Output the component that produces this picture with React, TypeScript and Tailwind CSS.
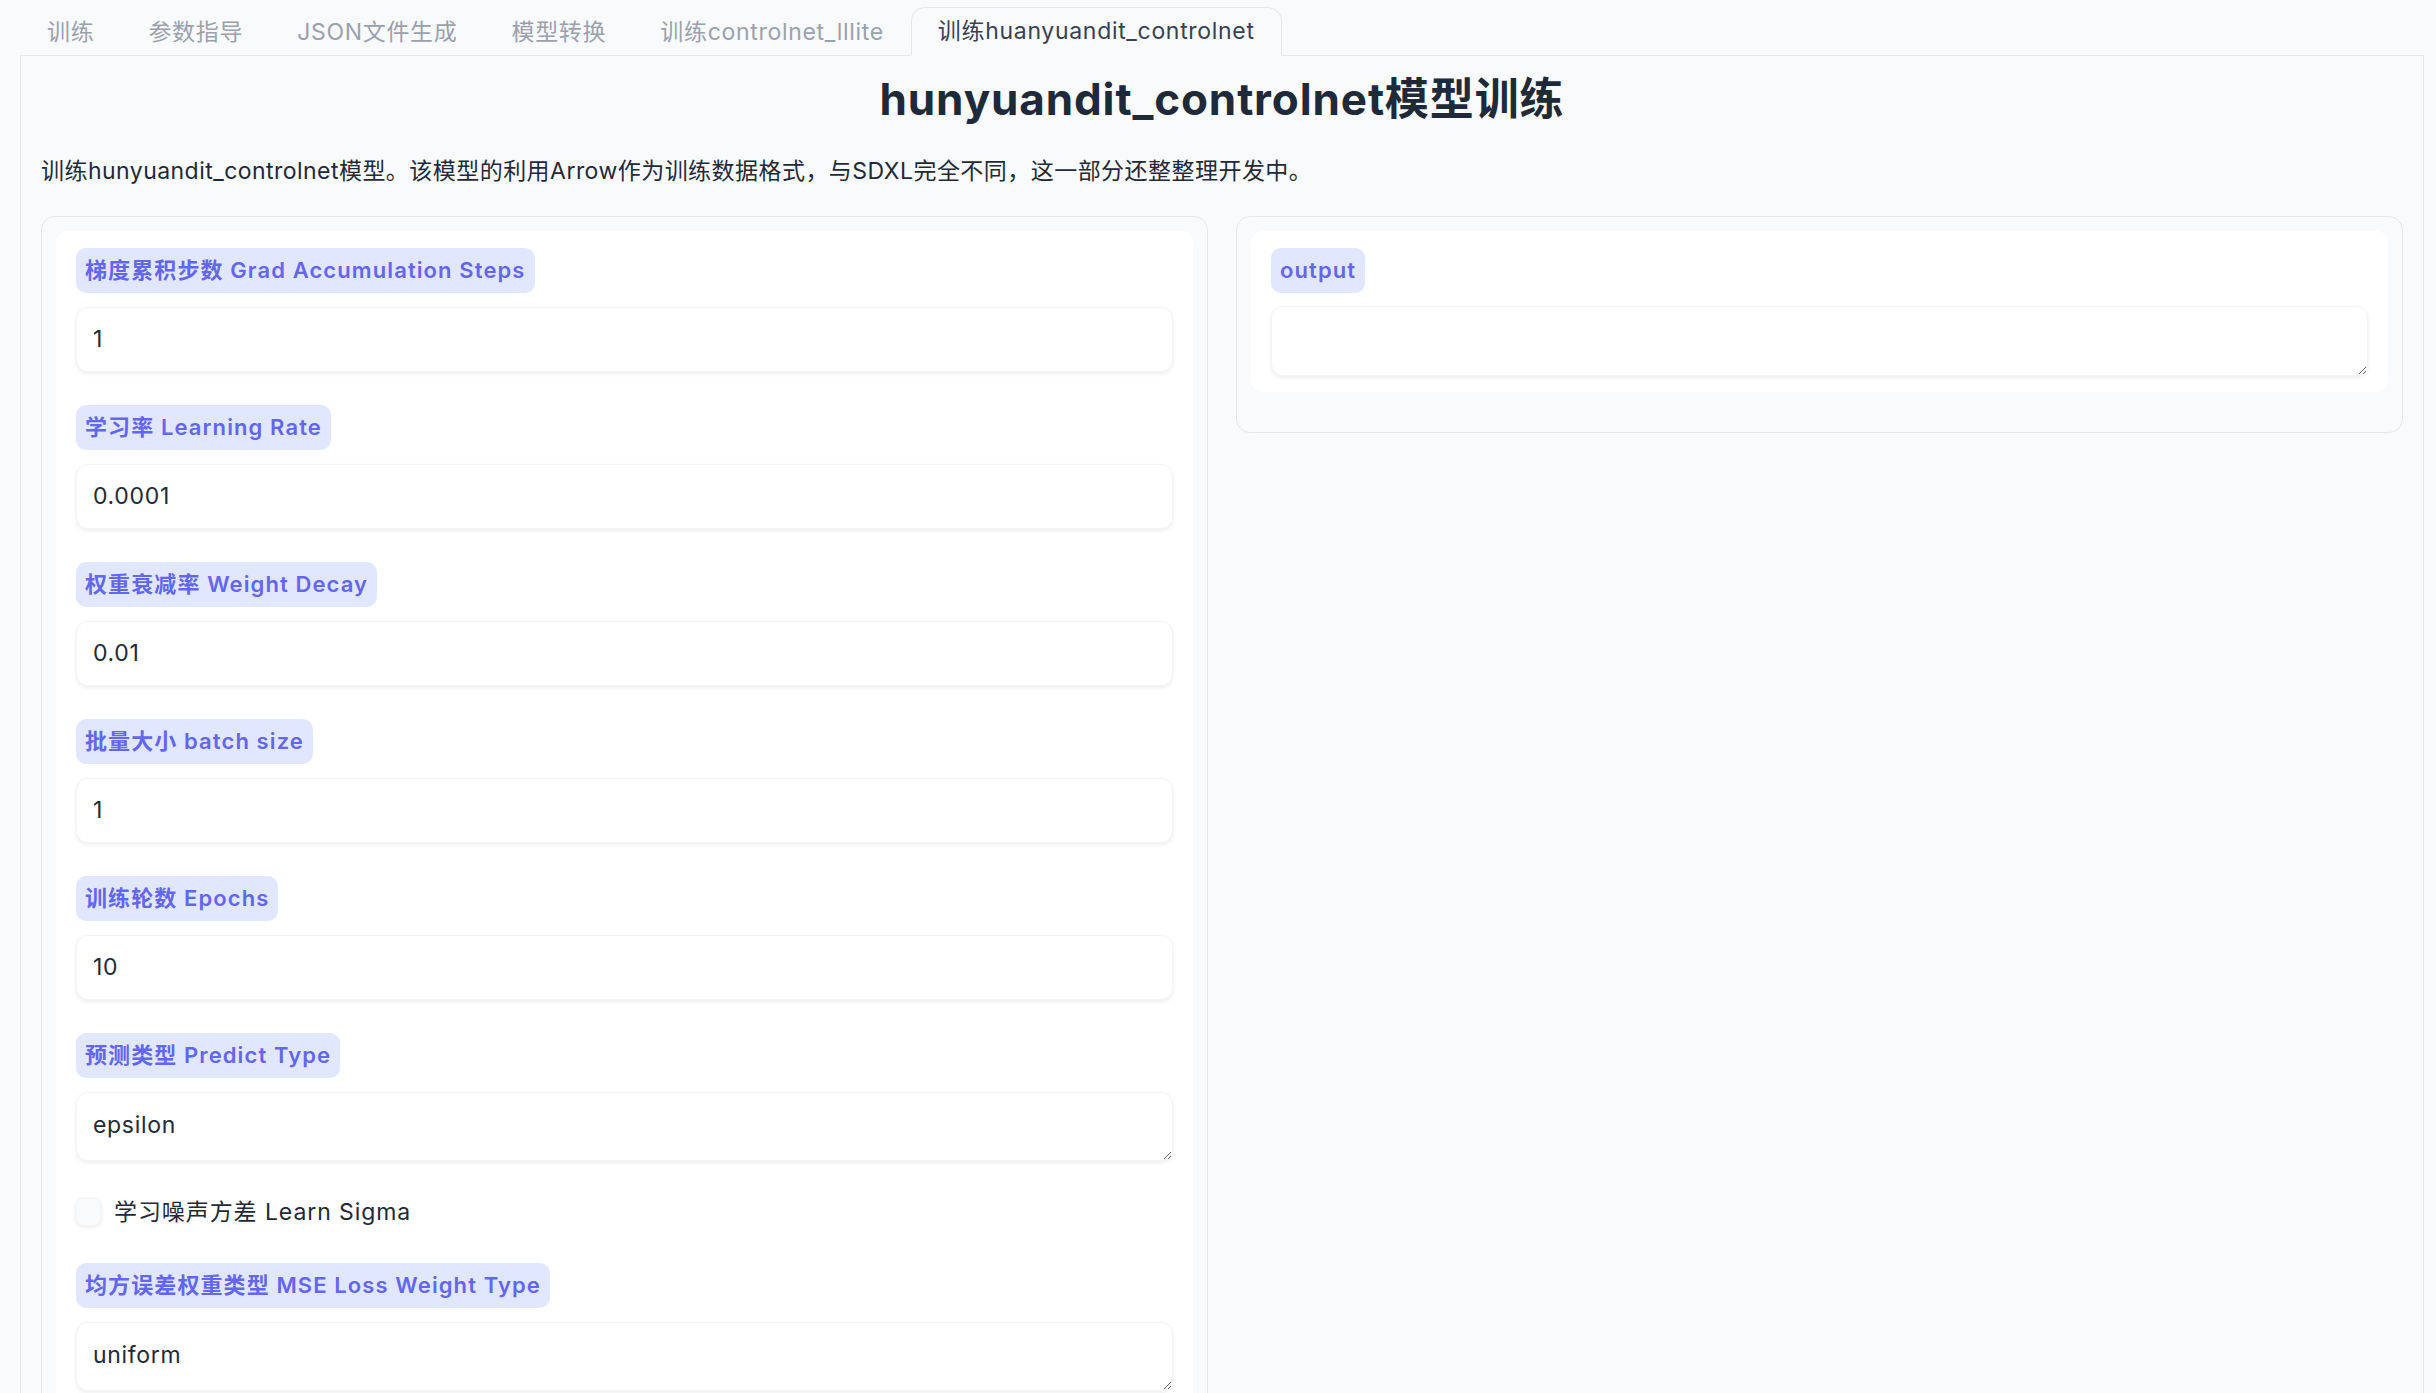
import React from 'react';

const tabs = ['训练', '参数指导', 'JSON文件生成', '模型转换', '训练controlnet_lllite', '训练huanyuandit_controlnet'];

const fields: { label: string; value: string; kind: 'input' | 'textarea' | 'checkbox' }[] = [
  { label: '梯度累积步数 Grad Accumulation Steps', value: '1', kind: 'input' },
  { label: '学习率 Learning Rate', value: '0.0001', kind: 'input' },
  { label: '权重衰减率 Weight Decay', value: '0.01', kind: 'input' },
  { label: '批量大小 batch size', value: '1', kind: 'input' },
  { label: '训练轮数 Epochs', value: '10', kind: 'input' },
  { label: '预测类型 Predict Type', value: 'epsilon', kind: 'textarea' },
  { label: '学习噪声方差 Learn Sigma', value: '', kind: 'checkbox' },
  { label: '均方误差权重类型 MSE Loss Weight Type', value: 'uniform', kind: 'textarea' },
];

const font = { fontFamily: 'Inter, "Noto Sans CJK SC", sans-serif' };

function Badge({ text }: { text: string }) {
  return (
    <div className="self-start h-[45px] px-[9px] flex items-center rounded-[10px] bg-[#e0e7ff] text-[#6366f1] text-[22px] font-semibold tracking-[0.05em]">
      {text}
    </div>
  );
}

function Field({ f }: { f: (typeof fields)[number] }) {
  if (f.kind === 'checkbox') {
    return (
      <label className="flex items-center gap-[13px] h-[36px]">
        <span className="w-[25px] h-[28px] rounded-[7px] bg-gray-50 shadow-[0_1px_4px_rgba(0,0,0,0.10)] border border-gray-100" />
        <span className="text-[23px] text-gray-800 tracking-[0.04em]">{f.label}</span>
      </label>
    );
  }
  return (
    <div className="flex flex-col gap-[14px]">
      <Badge text={f.label} />
      {f.kind === 'input' ? (
        <div className="h-[65px] flex items-center px-[16px] rounded-[12px] bg-white border border-gray-100 shadow-[0_2px_4px_rgba(0,0,0,0.07)] text-[23px] text-gray-800 tracking-[0.03em]">
          {f.value}
        </div>
      ) : (
        <textarea
          readOnly
          value={f.value}
          style={font}
          className="h-[69px] px-[16px] pt-[16px] leading-[32px] rounded-[12px] bg-white border border-gray-100 shadow-[0_2px_4px_rgba(0,0,0,0.07)] text-[23px] text-gray-800 tracking-[0.03em] outline-none resize-y"
        />
      )}
    </div>
  );
}

export default function App() {
  return (
    <div style={font} className="w-full h-[1393px] overflow-hidden bg-gray-50 flex flex-col">
      <div className="shrink-0 flex px-[20px] pt-[7px] h-[56px] relative z-10">
        {tabs.map((t, i) => (
          <div
            key={t}
            className={`px-[26px] flex items-center text-[23px] tracking-[0.03em] rounded-t-[14px] ${
              i === tabs.length - 1
                ? 'border border-gray-200 border-b-gray-50 bg-gray-50 text-gray-700'
                : 'text-gray-400 border border-transparent border-b-0'
            }`}
          >
            {t}
          </div>
        ))}
      </div>

      <div className="flex-1 ml-[20px] mr-[12px] -mt-px border border-gray-200 bg-gray-50 px-[20px] pt-[14px]">
        <h1 className="text-center text-[44px] font-bold text-gray-800 leading-[58px] tracking-[0.02em]">hunyuandit_controlnet模型训练</h1>
        <p className="mt-[26px] text-[23px] leading-[34px] text-gray-800 tracking-[0.02em]">
          训练hunyuandit_controlnet模型。该模型的利用Arrow作为训练数据格式，与SDXL完全不同，这一部分还整整理开发中。
        </p>

        <div className="mt-[28px] grid grid-cols-2 gap-[28px] items-start">
          <div className="rounded-[14px] border border-gray-200 bg-gray-50 p-[14px]">
            <div className="rounded-[12px] bg-white px-[20px] pt-[17px] pb-[20px] flex flex-col gap-[33px]">
              {fields.map((f) => (
                <Field key={f.label} f={f} />
              ))}
            </div>
          </div>

          <div className="rounded-[14px] border border-gray-200 bg-gray-50 px-[14px] pt-[14px] pb-[40px]">
            <div className="rounded-[12px] bg-white px-[20px] pt-[17px] pb-[16px] flex flex-col gap-[13px]">
              <Badge text="output" />
              <textarea
                readOnly
                style={font}
                className="h-[70px] px-[16px] pt-[16px] rounded-[12px] bg-white border border-gray-100 shadow-[0_2px_4px_rgba(0,0,0,0.07)] text-[23px] text-gray-800 outline-none resize-y"
              />
            </div>
          </div>
        </div>
      </div>
    </div>
  );
}
